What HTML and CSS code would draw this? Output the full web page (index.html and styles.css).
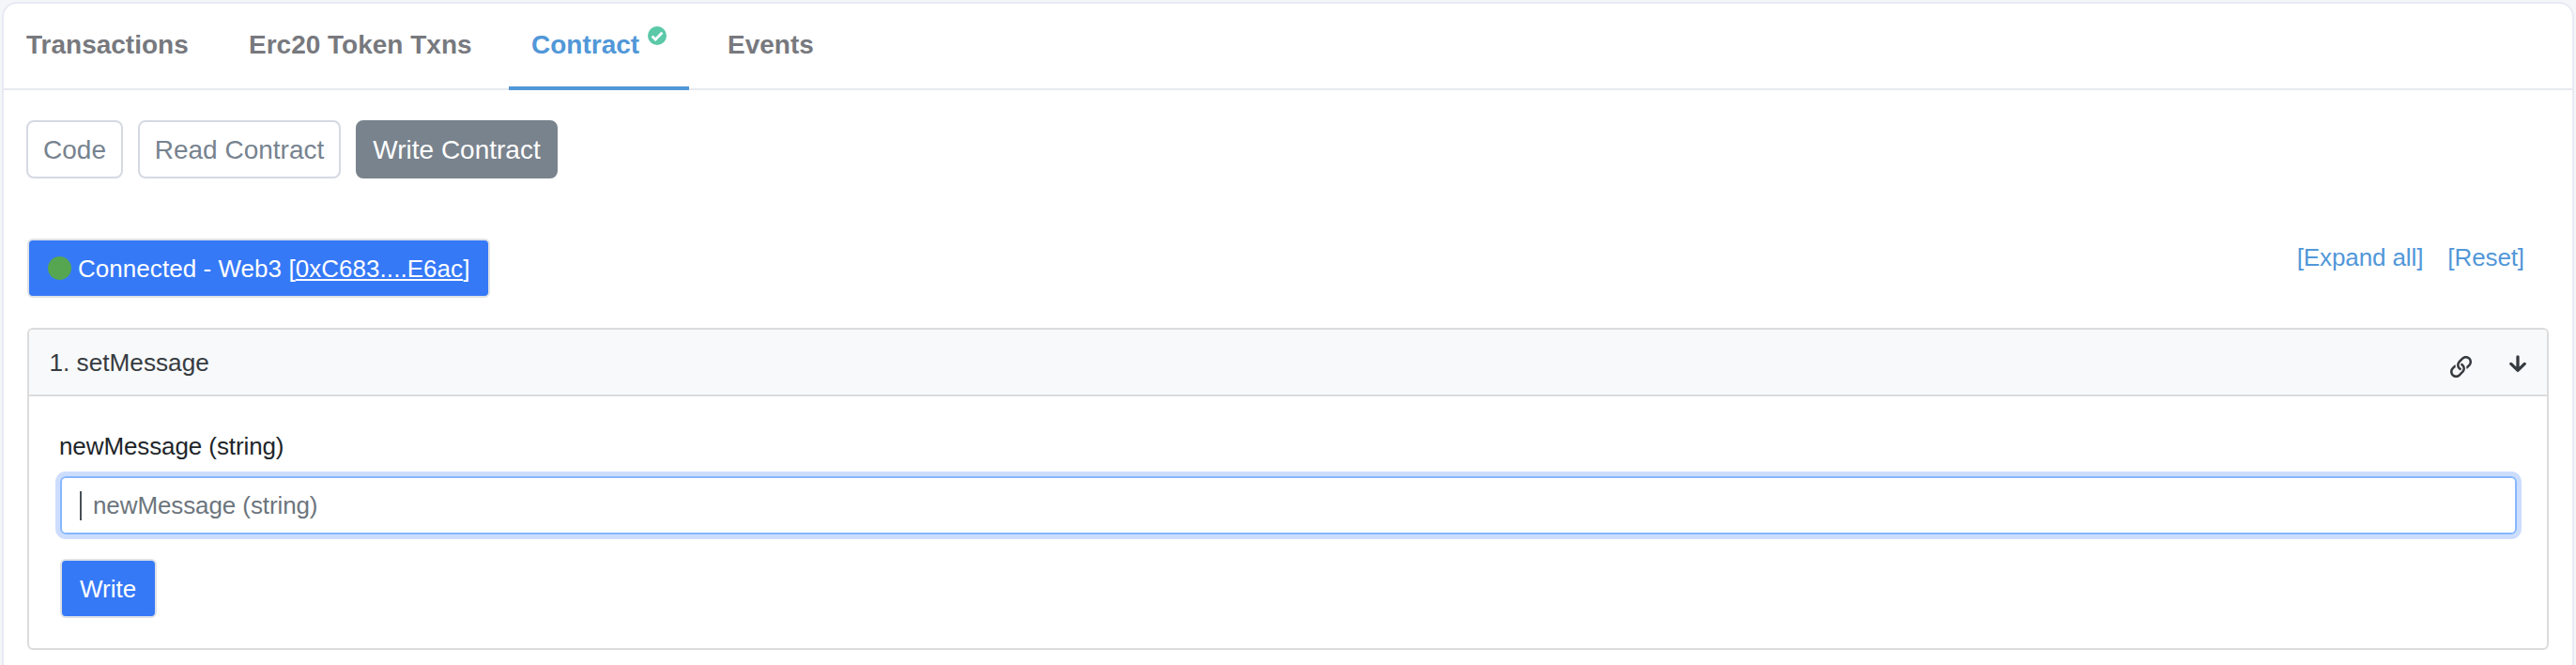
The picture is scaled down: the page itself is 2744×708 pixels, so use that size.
FILE: index.html
```html
<!DOCTYPE html>
<html lang="en">
<head>
<meta charset="utf-8">
<title>Contract</title>
<link rel="stylesheet" href="styles.css">
</head>
<body>
<main class="card">
  <nav class="tabs">
    <a class="tab tab-transactions">Transactions</a>
    <a class="tab tab-tokens">Erc20 Token Txns</a>
    <a class="tab tab-contract active">Contract<svg class="verified" viewBox="0 0 20 20"><circle cx="10" cy="10" r="10"/><path d="M4.6 10.4l3.6 3.6 7.2-7.2"/></svg></a>
    <a class="tab tab-events">Events</a>
  </nav>
  <div class="modes">
    <button class="mode mode-code">Code</button>
    <button class="mode mode-read">Read Contract</button>
    <button class="mode mode-write selected">Write Contract</button>
  </div>
  <div class="toolbar">
    <button class="primary connect"><span class="dot"></span><span class="connect-text">Connected - Web3 [<u>0xC683....E6ac</u>]</span></button>
    <div class="links"><a>[Expand all]</a><a>[Reset]</a></div>
  </div>
  <section class="method">
    <header class="method-head">
      <span class="method-name">1. setMessage</span>
      <svg class="link-icon" viewBox="0 0 512 512"><path d="M314.222 197.78c51.091 51.091 54.377 132.287 9.75 187.16-6.242 7.73-2.784 3.865-84.94 86.02-54.696 54.696-143.266 54.745-197.99 0-54.711-54.69-54.734-143.255 0-197.99 32.773-32.773 51.835-51.899 63.409-63.457 7.463-7.452 20.331-2.354 20.486 8.192a173.31 173.31 0 0 0 4.746 37.828c.966 4.029-.272 8.269-3.202 11.198L80.632 312.57c-32.755 32.775-32.887 85.892 0 118.8 32.775 32.755 85.892 32.887 118.8 0l75.19-75.2c32.718-32.725 32.777-86.013 0-118.79a83.722 83.722 0 0 0-22.814-16.229c-4.623-2.233-7.182-7.25-6.561-12.346 1.356-11.122 6.296-21.885 14.815-30.405l4.375-4.375c3.625-3.626 9.177-4.594 13.76-2.294 12.999 6.524 25.187 15.211 36.025 26.049zM470.958 41.04c-54.724-54.745-143.294-54.696-197.99 0-82.156 82.156-78.698 78.29-84.94 86.02-44.627 54.873-41.341 136.069 9.75 187.16 10.838 10.838 23.026 19.525 36.025 26.049 4.582 2.3 10.134 1.331 13.76-2.294l4.375-4.375c8.52-8.519 13.459-19.283 14.815-30.405.621-5.096-1.938-10.113-6.561-12.346a83.706 83.706 0 0 1-22.814-16.229c-32.777-32.777-32.718-86.065 0-118.79l75.19-75.2c32.908-32.887 86.025-32.755 118.8 0 32.887 32.908 32.755 86.025 0 118.8l-45.848 45.84c-2.93 2.929-4.168 7.169-3.202 11.198a173.31 173.31 0 0 1 4.746 37.828c.155 10.546 13.023 15.644 20.486 8.192 11.574-11.558 30.636-30.684 63.409-63.457 54.733-54.735 54.71-143.3-.001-197.991z"/></svg>
      <svg class="arrow-icon" viewBox="0 0 18 19"><path d="M9 1.8v14.4M1.8 9.4L9 16.4l7.2-7"/></svg>
    </header>
    <div class="method-body">
      <label class="label">newMessage (string)</label>
      <div class="input"><span class="caret"></span><span class="placeholder">newMessage (string)</span></div>
      <button class="primary write">Write</button>
    </div>
  </section>
</main>
</body>
</html>
```
FILE: styles.css
```css
* { box-sizing: border-box; }
html, body { height: 100%; }
body {
  margin: 0;
  padding: 2px 2px 0;
  background: #f5f6fa;
  font-family: "Liberation Sans", Arial, sans-serif;
  font-size: 26px;
  overflow: hidden;
}
button { font: inherit; margin: 0; }
.card {
  height: 740px;
  background: #fff;
  border: 2px solid #e7eaf3;
  border-radius: 16px;
}
.tabs {
  display: flex;
  height: 92px;
  border-bottom: 2px solid #e7eaf0;
}
.tab {
  height: 92px;
  padding: 0 24px;
  margin-right: 16px;
  font-size: 28px;
  font-weight: 700;
  line-height: 87px;
  color: #77797e;
  white-space: nowrap;
}
.tab-transactions { width: 221px; }
.tab-tokens { width: 285px; }
.tab-contract { width: 192px; }
.tab-events { padding-left: 25px; }
.tab.active { color: #5197d8; border-bottom: 4px solid #5197d8; }
.verified { width: 20px; height: 20px; margin-left: 9px; vertical-align: 9px; }
.verified circle { fill: #5bc8a8; }
.verified path { fill: none; stroke: #fff; stroke-width: 2.8; }
.modes { display: flex; gap: 16px; padding: 32px 24px 0; }
.mode {
  height: 62px;
  padding: 1px 0 0;
  border: 2px solid #d5dae2;
  border-radius: 8px;
  background: #fff;
  color: #77838f;
  font-size: 28px;
  line-height: 57px;
  white-space: nowrap;
}
.mode-code { width: 103px; }
.mode-read { width: 216px; }
.mode-write { width: 215px; }
.mode.selected { background: #79838d; border-color: #79838d; color: #fff; }
.toolbar {
  display: flex;
  justify-content: space-between;
  height: 63px;
  margin: 64px 51px 0 25px;
}
.primary {
  display: flex;
  align-items: center;
  height: 63px;
  padding: 0 19px;
  border: 2px solid #dee2e6;
  border-radius: 6px;
  background: #3579f7;
  color: #fff;
  line-height: 58px;
}
.connect { width: 493px; padding-left: 20px; }
.connect-text { white-space: nowrap; letter-spacing: 0.05px; }
.connect u { text-decoration-thickness: 2px; text-underline-offset: 2px; }
.dot { flex: none; width: 25px; height: 25px; margin-right: 7px; border-radius: 50%; background: #56a550; }
.links { display: flex; gap: 26px; color: #5197d8; line-height: 40px; letter-spacing: -0.1px; }
.method { margin: 32px 25px 0; height: 343px; border: 2px solid #dcdcdd; border-radius: 6px; }
.method-head {
  display: flex;
  align-items: center;
  height: 71px;
  padding: 0 22px 0 21.5px;
  border-bottom: 2px solid #dadbdd;
  border-radius: 4px 4px 0 0;
  background: #f8f9fb;
  color: #363b40;
}
.method-name { flex: 1; padding-top: 2px; font-size: 26.2px; }
.link-icon { width: 23px; height: 23px; margin: 9px 40px 0 0; fill: #363b40; }
.arrow-icon { width: 18px; height: 19px; margin-top: 4px; }
.arrow-icon path { fill: none; stroke: #363b40; stroke-width: 3.3; stroke-linecap: round; stroke-linejoin: round; }
.method-body { padding: 32px 32px 0 33px; }
.label { display: block; height: 53px; margin-left: -1px; line-height: 43px; letter-spacing: -0.1px; color: #212529; }
.input {
  display: flex;
  align-items: center;
  height: 62px;
  padding-left: 19px;
  border: 2px solid #86b7fe;
  border-radius: 6px;
  box-shadow: 0 0 0 5px #cdddfe;
}
.caret { width: 2px; height: 31px; background: #495057; }
.placeholder { margin-left: 12px; letter-spacing: -0.1px; color: #6c757d; }
.write { width: 103px; margin-top: 26px; }
```
